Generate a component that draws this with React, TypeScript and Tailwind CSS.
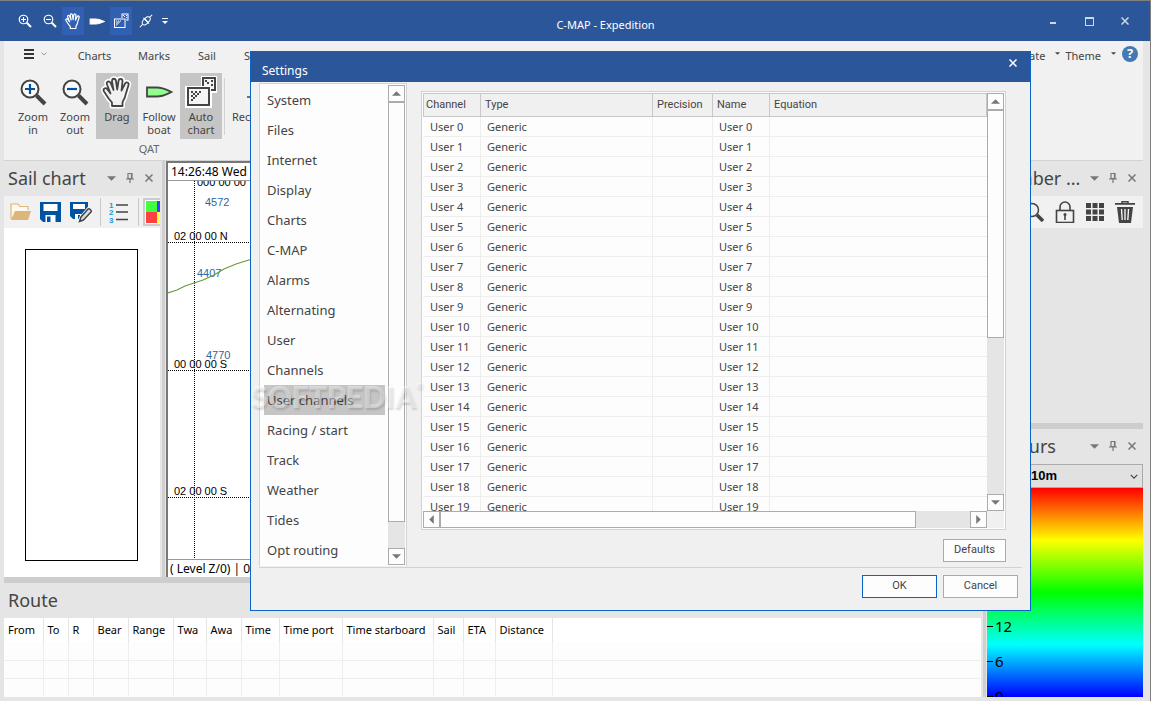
import React, { useState } from "react";

interface Column {
  label: string;
  width: string;
}

const categories = [
  "System",
  "Files",
  "Internet",
  "Display",
  "Charts",
  "C-MAP",
  "Alarms",
  "Alternating",
  "User",
  "Channels",
  "User channels",
  "Racing / start",
  "Track",
  "Weather",
  "Tides",
  "Opt routing",
];

const channels = Array.from({ length: 20 }, (_, i) => ({ name: `User ${i}`, type: "Generic" }));

const channelColumns: Column[] = [
  { label: "Channel", width: "w-[58px]" },
  { label: "Type", width: "w-[172px]" },
  { label: "Precision", width: "w-[60px]" },
  { label: "Name", width: "w-[57px]" },
  { label: "Equation", width: "w-auto" },
];

const routeColumns: Column[] = [
  { label: "From", width: "w-[39px]" },
  { label: "To", width: "w-[25px]" },
  { label: "R", width: "w-[25px]" },
  { label: "Bear", width: "w-[35px]" },
  { label: "Range", width: "w-[45px]" },
  { label: "Twa", width: "w-[33px]" },
  { label: "Awa", width: "w-[35px]" },
  { label: "Time", width: "w-[38px]" },
  { label: "Time port", width: "w-[63px]" },
  { label: "Time starboard", width: "w-[91px]" },
  { label: "Sail", width: "w-[30px]" },
  { label: "ETA", width: "w-[32px]" },
  { label: "Distance", width: "w-[57px]" },
];

const depthTicks = [0, 6, 12, 18, 24, 30];

/* ---------- Icons ---------- */

function ZoomIcon({ minus, small }: { minus?: boolean; small?: boolean }) {
  return (
    <svg viewBox="0 0 28 28" className={small ? "h-[14px] w-[14px]" : "h-7 w-7"} fill="none">
      <circle cx="11" cy="11" r="8.5" stroke="currentColor" strokeWidth={small ? 2.4 : 2} fill={small ? "none" : "#fafafa"} />
      <path d="M17.5 17.5 26 26" stroke="currentColor" strokeWidth="4" />
      <path
        d={minus ? "M6 11h10" : "M6 11h10M11 6v10"}
        stroke={small ? "currentColor" : "#0050a0"}
        strokeWidth="2.2"
      />
    </svg>
  );
}

const handPath =
  "M10 29v-3.500L7 22 2 14.500C.5 11.500 3.500 10 5.300 12.200L8.500 16.500 5 7.500C4 4.500 7.200 3.200 8.600 6L11.500 13 10 4.500C9.800 1 13.500.8 14 4L15.200 12.500 16.500 4C17 .8 20.700 1.200 20.500 4.500L19.500 13.500 22.800 7C24.300 4 27.500 5.500 26.400 8.500L23.500 18C23 22 21 23 20.500 25.500V29Z";

function HandIcon({ small }: { small?: boolean }) {
  return (
    <svg viewBox="0 0 30 30" className={small ? "h-4 w-4" : "h-[30px] w-[30px] overflow-visible"} strokeLinejoin="round">
      {!small && <path d={handPath} fill="#fff" stroke="#fff" strokeWidth="5" />}
      <path d={handPath} fill={small ? "none" : "#f1f1f1"} stroke="currentColor" strokeWidth={small ? 2.2 : 1.8} />
    </svg>
  );
}

function BoatIcon({ small }: { small?: boolean }) {
  return (
    <svg viewBox="0 0 28 12" className={small ? "h-[7px] w-4" : "h-3 w-7"}>
      <path
        d="M2 1.500H12C18 1.500 22 4 26.500 6 22 8 18 10.500 12 10.500H2Z"
        fill={small ? "#fff" : "#90ff90"}
        stroke="currentColor"
        strokeWidth="1.800"
      />
    </svg>
  );
}

function AutoChartIcon({ small }: { small?: boolean }) {
  const inner = small ? "#3160b2" : "#f4f4f4";
  return (
    <svg viewBox="0 0 32 32" className={small ? "h-4 w-4" : "h-8 w-8"}>
      {!small && <path d="M16 0h16v17h-5v15H0V10h16Z" fill="#fff" />}
      <rect x="18" y="2" width="12" height="12" fill={inner} stroke="currentColor" strokeWidth="2" />
      <path d="M20 4h2v2h-2zM26 4h2v2h-2zM22 6h2v2h-2zM26 8h2v2h-2zM24 10h2v2h-2z" fill="currentColor" />
      <rect x="1" y="10" width="25" height="21" fill={small ? inner : "#fff"} />
      <rect x="3" y="12" width="21" height="17" fill={inner} stroke="currentColor" strokeWidth="2" />
      <path
        d="M6 15h2v2H6zM10 15h2v2h-2zM14 15h2v2h-2zM8 17h2v2H8zM12 17h2v2h-2zM6 19h2v2H6zM10 19h2v2h-2zM8 21h2v2H8zM6 23h2v2H6z"
        fill="currentColor"
      />
    </svg>
  );
}

function PlugIcon() {
  return (
    <svg viewBox="0 0 16 16" className="h-[14px] w-[14px]" fill="none" stroke="currentColor" strokeWidth="1.200">
      <path d="M1 15 4 12M12 4l3-3M4.500 12C2.500 10 4 7.500 6.500 5.500L10.500 9.500C8.500 12 6 13.500 4.500 12ZM6.500 5.500C8.500 3 11 2.500 12.300 3.800S13 7.500 10.500 9.500" />
      <path d="M5 4.500 11.500 11" />
    </svg>
  );
}

function Caret({ className }: { className?: string }) {
  return (
    <svg viewBox="0 0 8 4" className={className}>
      <path d="M0 0h8L4 4z" fill="currentColor" />
    </svg>
  );
}

function Cross({ className }: { className?: string }) {
  return (
    <svg viewBox="0 0 8 8" className={className} fill="none" stroke="currentColor" strokeWidth="1.500">
      <path d="M.5.5l7 7M7.500.5l-7 7" />
    </svg>
  );
}

function FolderIcon() {
  return (
    <svg viewBox="0 0 22 20" className="h-5 w-[22px]">
      <path d="M1 17V2h7l2 2.500h8V8" fill="#fff8ec" stroke="#dcb67a" strokeWidth="1.200" />
      <path d="M1 18 5 9h16l-3 9z" fill="#dcb67a" />
    </svg>
  );
}

function SaveIcon({ edit }: { edit?: boolean }) {
  return (
    <svg viewBox="0 0 22 22" className="h-[22px] w-[22px]">
      <path d={edit ? "M0 1h18v13l-4 4H3l-3-3Z" : "M0 1h21v20H3l-3-3Z"} fill="#0053a0" />
      <path d={edit ? "M3 3h12v5H3z" : "M3.500 3h14v7h-14z"} fill="#fff" />
      <path d={edit ? "M5 13h6v5H5z" : "M5.500 14h10v7h-10z"} fill="#fff" />
      <path d={edit ? "M8 14h2v4H8z" : "M7 15.500h3.500V21H7z"} fill="#0053a0" />
      {edit && (
        <>
          <path d="m9 21 2-5 7-8 3 3-7 8Z" fill="#fff" stroke="#fff" strokeWidth="3" />
          <path d="m9.500 20.500 1.500-4.500 7-8c1-1 4 1.500 3 3l-7.500 8z" fill="#ddd" stroke="#444" strokeWidth="1.500" />
        </>
      )}
    </svg>
  );
}

function NumberedListIcon() {
  return (
    <svg viewBox="0 0 20 22" className="h-[22px] w-5">
      <path d="M7 4h12M7 11h12M7 18.500h12" stroke="#444" strokeWidth="1.500" />
      <g fill="#1c97dc" fontSize="8" fontWeight="700" fontFamily="Liberation Sans, sans-serif">
        <text x="0" y="7">1</text>
        <text x="0" y="14">2</text>
        <text x="0" y="22">3</text>
      </g>
    </svg>
  );
}

/* ---------- Small shared parts ---------- */

function PanelHeader({ title }: { title: string }) {
  return (
    <div className="flex h-[35px] shrink-0 items-center pr-px pb-px text-[#777]">
      <h2 className="min-w-0 flex-1 pl-1 text-[18px] leading-6 whitespace-nowrap text-[#444]">{title}</h2>
      <button aria-label="Panel menu" className="flex w-5 justify-center">
        <Caret className="h-[5px] w-[9px]" />
      </button>
      <button aria-label="Pin panel" className="flex w-[18px] justify-center">
        <svg viewBox="0 0 8 10" className="h-[10px] w-2" fill="none" stroke="currentColor">
          <path d="M2 .5h4v5H2zM5.500 1v4M0 6h8M4 6v4" strokeWidth="1.200" />
        </svg>
      </button>
      <button aria-label="Close panel" className="flex w-5 justify-center">
        <Cross className="h-2 w-2" />
      </button>
    </div>
  );
}

function RibbonButton({ label, icon, active }: { label: string; icon: React.ReactNode; active?: boolean }) {
  return (
    <button
      className={`flex h-[66px] w-[42px] flex-col items-center text-[11px] leading-[13px] ${active ? "bg-[#c5c5c5]" : ""}`}
    >
      <span className="flex h-[37px] shrink-0 items-center justify-center pt-px">{icon}</span>
      <span className="w-9 text-center">{label}</span>
    </button>
  );
}

function ScrollButton({ label, rotate }: { label: string; rotate?: string }) {
  return (
    <button
      aria-label={label}
      className="flex h-[17px] w-[17px] shrink-0 items-center justify-center border border-[#ababab] bg-[#fdfdfd] text-[#777]"
    >
      <Caret className={`h-[5px] w-[9px] ${rotate ?? ""}`} />
    </button>
  );
}

/* ---------- Main window ---------- */

function TitleBar() {
  return (
    <header className="flex h-10 shrink-0 items-center bg-[#2b579a] text-white">
      <div className="flex w-[174px] items-center pl-[13px]">
        <button aria-label="Zoom in" className="flex h-7 w-6 items-center justify-center">
          <ZoomIcon small />
        </button>
        <button aria-label="Zoom out" className="flex h-7 w-[25px] items-center justify-center">
          <ZoomIcon small minus />
        </button>
        <button aria-label="Drag" className="flex h-7 w-[22px] items-center justify-center bg-[#3160b2]">
          <HandIcon small />
        </button>
        <button aria-label="Follow boat" className="flex h-7 w-[26px] items-center justify-center">
          <BoatIcon small />
        </button>
        <button aria-label="Auto chart" className="flex h-7 w-[22px] items-center justify-center bg-[#3160b2]">
          <AutoChartIcon small />
        </button>
        <button aria-label="Connect" className="flex h-7 w-[27px] items-center justify-center">
          <PlugIcon />
        </button>
        <button aria-label="Customise toolbar" className="flex h-7 w-3 flex-col items-center justify-center gap-[2px]">
          <span className="h-px w-[6px] bg-white" />
          <Caret className="h-[3px] w-[6px]" />
        </button>
      </div>
      <h1 className="flex-1 pt-2 pl-[2px] text-center text-[11px]">C-MAP - Expedition</h1>
      <div className="flex items-center pr-[7px] text-[#d0d6e2]">
        <button aria-label="Minimise" className="flex h-7 w-9 items-center justify-center pt-1">
          <span className="h-[2px] w-[6px] bg-[#d0d6e2]" />
        </button>
        <button aria-label="Maximise" className="flex h-7 w-9 items-center justify-center">
          <span className="h-[9px] w-[9px] border border-t-2 border-[#d0d6e2]" />
        </button>
        <button aria-label="Close" className="flex h-7 w-9 items-center justify-center">
          <Cross className="h-2 w-2" />
        </button>
      </div>
    </header>
  );
}

function Ribbon() {
  return (
    <nav className="flex h-[120px] shrink-0 flex-col border-b border-[#d2d2d2] bg-[#f1f1f1] text-[#444]">
      <div className="flex h-8 items-center pb-[2px] text-[11px]">
        <button aria-label="File menu" className="flex w-[66px] items-center gap-[7px] pb-1 pl-5">
          <span className="flex flex-col gap-[2px]">
            <span className="h-[2px] w-[10px] bg-[#333]" />
            <span className="h-[2px] w-[10px] bg-[#333]" />
            <span className="h-[2px] w-[10px] bg-[#333]" />
          </span>
          <svg viewBox="0 0 6 4" className="h-1 w-[6px]" fill="none" stroke="#999">
            <path d="M.5.5 3 3 5.500.5" />
          </svg>
        </button>
        <button className="w-[49px]">Charts</button>
        <button className="ml-3 w-[46px]">Marks</button>
        <button className="ml-2 w-11">Sail</button>
        <button className="ml-[15px] whitespace-nowrap">Sensors</button>
        <div className="ml-auto flex items-center">
          <button className="flex items-start gap-[10px]">
            Update
            <Caret className="mt-1 h-[3px] w-[5px]" />
          </button>
          <button className="ml-[5px] flex items-start gap-[10px]">
            Theme
            <Caret className="mt-1 h-[3px] w-[5px]" />
          </button>
          <button
            aria-label="Help"
            className="mr-[5px] mb-1 ml-[6px] flex h-4 w-4 items-center justify-center rounded-full bg-[#4579b5] text-[13px] font-bold text-white"
          >
            ?
          </button>
        </div>
      </div>
      <div className="flex pl-2">
        <div>
          <div className="flex">
            <RibbonButton label="Zoom in" icon={<ZoomIcon />} />
            <RibbonButton label="Zoom out" icon={<ZoomIcon minus />} />
            <RibbonButton label="Drag" icon={<HandIcon />} active />
            <RibbonButton label="Follow boat" icon={<BoatIcon />} />
            <RibbonButton label="Auto chart" icon={<AutoChartIcon />} active />
          </div>
          <div className="pl-16 text-center text-[11px] leading-5 text-[#666]">QAT</div>
        </div>
        <div className="mt-[5px] ml-[2px] h-[57px] w-px bg-[#d2d2d2]" />
        <button className="ml-[7px] flex h-[66px] flex-col items-center text-[11px] leading-[13px]">
          <span className="flex h-[37px] items-center">
            <svg viewBox="0 0 16 16" className="h-4 w-4" fill="none" stroke="#444" strokeWidth="1.500">
              <path d="M5 13h4" />
              <circle cx="12" cy="9" r="3" />
            </svg>
          </span>
          Record
        </button>
      </div>
    </nav>
  );
}

function SailChartPanel() {
  return (
    <section className="flex w-[156px] shrink-0 flex-col overflow-hidden">
      <PanelHeader title="Sail chart" />
      <div className="flex h-8 shrink-0 items-center bg-[#f1f1f1]">
        <button aria-label="Open" className="ml-[6px]">
          <FolderIcon />
        </button>
        <button aria-label="Save" className="ml-2">
          <SaveIcon />
        </button>
        <button aria-label="Save as" className="ml-2">
          <SaveIcon edit />
        </button>
        <span className="ml-2 h-7 w-px shrink-0 bg-[#c8c8c8]" />
        <button aria-label="Order" className="ml-2">
          <NumberedListIcon />
        </button>
        <span className="ml-[9px] h-7 w-px shrink-0 bg-[#c8c8c8]" />
        <button aria-label="Colours" className="ml-1 grid h-7 w-7 shrink-0 grid-cols-2 border-2 border-[#ccc] bg-white p-[1px]">
          <span className="bg-[#40ff40]" />
          <span className="bg-[#4040ff]" />
          <span className="bg-[#ff4040]" />
          <span className="bg-[#ffff40]" />
        </button>
      </div>
      <div className="flex flex-1 bg-white px-[21px] pt-[21px] pb-4">
        <div className="mr-px flex-1 border border-black" />
      </div>
    </section>
  );
}

function ChartView() {
  return (
    <section className="flex min-w-0 flex-1 flex-col border-t-2 border-l-2 border-[#777] bg-white">
      <div className="h-[18px] shrink-0 border-b border-[#999] pl-[3px] text-[12px] leading-[18px] text-black">
        14:26:48 Wed
      </div>
      <svg className="min-h-0 w-full flex-1" fontFamily="Liberation Sans, sans-serif" fontSize="11">
        <g stroke="#000" strokeDasharray="1 1" shapeRendering="crispEdges">
          <path d="M26.500 0V900M0 61.500H2000M0 189.500H2000M0 316.500H2000" />
        </g>
        <g fill="#000">
          <text x="29" y="5">000 00 00 W</text>
          <text x="6" y="59">02 00 00 N</text>
          <text x="6" y="187">00 00 00 S</text>
          <text x="6" y="314">02 00 00 S</text>
        </g>
        <g fill="#2f65a0">
          <text x="37" y="25">4572</text>
          <text x="29" y="96">4407</text>
          <text x="38" y="178">4770</text>
        </g>
        <path d="M0 112 9 109 17 105 26 102 35 99 46 94 56 88 68 83 84 78" fill="none" stroke="#6a9a3a" strokeWidth="1.200" />
      </svg>
      <div className="h-[18px] shrink-0 border-t border-[#999] pl-[2px] text-[12px] leading-[18px] whitespace-pre text-black">
        ( Level Z/0) | 0
      </div>
    </section>
  );
}

function RoutePanel() {
  return (
    <section className="shrink-0">
      <h2 className="pl-1 text-[18px] leading-[35px] text-[#444]">Route</h2>
      <div className="bg-[#fdfdfd] pb-px">
        <table className="w-full table-fixed border-collapse text-left text-[11px] text-black">
          <thead>
            <tr className="h-6 bg-white">
              {routeColumns.map((col) => (
                <th key={col.label} className={`${col.width} border-r border-[#e5e5e5] p-0 pl-1 font-normal whitespace-nowrap`}>
                  {col.label}
                </th>
              ))}
              <th />
            </tr>
          </thead>
          <tbody>
            {[0, 1, 2].map((row) => (
              <tr key={row} className="h-[18px] border-t border-[#eee] first:border-t-0">
                {routeColumns.map((col) => (
                  <td key={col.label} className="border-r border-[#eee] p-0" />
                ))}
                <td />
              </tr>
            ))}
          </tbody>
        </table>
      </div>
    </section>
  );
}

function NumberPanel() {
  return (
    <section className="flex h-[262px] shrink-0 flex-col">
      <PanelHeader title="Number ..." />
      <div className="flex h-8 items-center justify-end gap-[11px] bg-[#f1f1f1] pr-2 text-[#444]">
        <button aria-label="Find">
          <svg viewBox="0 0 20 20" className="h-5 w-5" fill="none" stroke="currentColor">
            <circle cx="8" cy="8" r="6.500" strokeWidth="1.500" />
            <path d="m13 13 6 6" strokeWidth="3.500" />
          </svg>
        </button>
        <button aria-label="Lock">
          <svg viewBox="0 0 20 22" className="h-[22px] w-5" fill="none" stroke="currentColor" strokeWidth="1.600">
            <rect x="1.500" y="9.500" width="17" height="12" />
            <path d="M5 9.500V6a5 5 0 0 1 10 0v3.500M10 14v5" />
            <circle cx="10" cy="13.500" r="1.500" fill="currentColor" stroke="none" />
          </svg>
        </button>
        <button aria-label="Grid">
          <svg viewBox="0 0 18 18" className="h-[18px] w-[18px]" fill="currentColor">
            <path d="M0 0h5v5H0zM6.500 0h5v5h-5zM13 0h5v5h-5zM0 6.500h5v5H0zM6.500 6.500h5v5h-5zM13 6.500h5v5h-5zM0 13h5v5H0zM6.500 13h5v5h-5zM13 13h5v5h-5z" />
          </svg>
        </button>
        <button aria-label="Delete">
          <svg viewBox="0 0 20 22" className="h-[22px] w-5">
            <path d="M7 2V.8h6V2" fill="none" stroke="currentColor" strokeWidth="1.500" />
            <path d="M0 2h20v1.800H0zM2 6h16l-2 16H4z" fill="currentColor" />
            <path d="m6.500 8 .7 11M10 8v11M13.500 8l-.7 11" stroke="#fff" strokeWidth="1.300" />
          </svg>
        </button>
      </div>
    </section>
  );
}

function ColoursPanel() {
  return (
    <section className="flex min-h-0 flex-1 flex-col">
      <PanelHeader title="Colours" />
      <div className="relative flex h-6 shrink-0">
        <select
          aria-label="Depth range"
          defaultValue="10m"
          className="w-full appearance-none border border-[#ababab] bg-[#e1e1e1] pl-[43px] font-['Liberation_Sans',sans-serif] text-[13px] font-bold text-black"
        >
          <option>10m</option>
        </select>
        <svg viewBox="0 0 10 6" className="pointer-events-none absolute top-[10px] right-[5px] h-[5px] w-2" fill="none" stroke="#444" strokeWidth="1.500">
          <path d="m1 1 4 4 4-4" />
        </svg>
      </div>
      <div className="relative flex-1 overflow-hidden bg-[linear-gradient(to_bottom,#f00_0%,#ff0_25%,#0f0_50%,#0ff_75%,#00f_100%)]">
        {depthTicks.map((depth, i) => (
          <div
            key={depth}
            className="absolute left-0 flex h-5 translate-y-1/2 items-center gap-[2px] text-[15px] leading-5 text-black"
            style={{ bottom: i * 35 + 1 }}
          >
            <span className="h-px w-[6px] bg-black" />
            {depth}
          </div>
        ))}
      </div>
    </section>
  );
}

/* ---------- Settings dialog ---------- */

function ChannelTable() {
  return (
    <div className="border border-[#d2d2d2] bg-[#fdfdfd] p-px">
      <div className="flex h-[418px]">
        <div className="min-w-0 flex-1 overflow-hidden">
          <table className="w-full table-fixed border-separate border-spacing-0 text-left text-[11px]">
            <thead>
              <tr className="h-6 bg-[#f0f0f0]">
                {channelColumns.map((col) => (
                  <th
                    key={col.label}
                    className={`${col.width} border-t border-r border-b border-[#c8c8c8] p-0 pl-1 font-['Roboto',sans-serif] font-normal first:border-l first:pl-[2px]`}
                  >
                    {col.label}
                  </th>
                ))}
              </tr>
            </thead>
            <tbody>
              {channels.map((channel) => (
                <tr key={channel.name} className="h-5">
                  <td className="border-r border-b border-[#eee] p-0 pt-[2px] pl-[7px]">{channel.name}</td>
                  <td className="border-r border-b border-[#eee] p-0 pt-[2px] pl-[6px]">{channel.type}</td>
                  <td className="border-r border-b border-[#eee] p-0" />
                  <td className="border-r border-b border-[#eee] p-0 pt-[2px] pl-[6px]">{channel.name}</td>
                  <td className="border-b border-[#eee] p-0" />
                </tr>
              ))}
            </tbody>
          </table>
        </div>
        <div className="flex w-[17px] flex-col bg-[#e5e5e5]">
          <ScrollButton label="Scroll up" rotate="rotate-180" />
          <div className="h-[228px] border border-[#ababab] bg-[#fdfdfd]" />
          <div className="mt-auto flex">
            <ScrollButton label="Scroll down" />
          </div>
        </div>
      </div>
      <div className="flex">
        <div className="flex flex-1 bg-[#e5e5e5]">
          <ScrollButton label="Scroll left" rotate="rotate-90" />
          <div className="w-[476px] border border-[#ababab] bg-[#fdfdfd]" />
          <div className="ml-auto flex">
            <ScrollButton label="Scroll right" rotate="-rotate-90" />
          </div>
        </div>
        <div className="w-[17px] bg-[#f0f0f0]" />
      </div>
    </div>
  );
}

function SettingsDialog() {
  const [selected, setSelected] = useState("User channels");

  return (
    <div
      role="dialog"
      aria-label="Settings"
      className="absolute top-[50px] right-[119px] left-[250px] border border-[#0a64c8] bg-[#f0f0f0] text-[#444]"
    >
      <div className="flex h-[30px] items-center justify-between bg-[#2b579a] pr-[13px] pl-[11px] text-white">
        <h2 className="pt-2 text-[12px] leading-4">Settings</h2>
        <button aria-label="Close settings" className="pb-2">
          <Cross className="h-2 w-2" />
        </button>
      </div>

      <div className="mx-2 mt-px flex border-b border-[#d2d2d2] pr-4 pb-px">
        <div className="flex border border-b-0 border-[#d2d2d2] bg-[#fdfdfd] p-px">
          <ul className="w-[127px] pr-[3px] pl-[3px]">
            {categories.map((name) => (
              <li key={name}>
                <button
                  onClick={() => setSelected(name)}
                  className={`h-[30px] w-full pt-[2px] pl-[3px] text-left text-[13px] ${name === selected ? "bg-[#c5c5c5]" : ""}`}
                >
                  {name}
                </button>
              </li>
            ))}
          </ul>
          <div className="flex w-[17px] flex-col bg-[#e5e5e5]">
            <ScrollButton label="Scroll list up" rotate="rotate-180" />
            <div className="h-[420px] border border-[#ababab] bg-[#fdfdfd]" />
            <div className="mt-auto flex">
              <ScrollButton label="Scroll list down" />
            </div>
          </div>
        </div>
        <div className="ml-[14px] min-w-0 flex-1 pt-2">
          <ChannelTable />
          <div className="mt-[9px] flex justify-end">
            <button className="h-[23px] w-[63px] border border-[#ababab] bg-[#fdfdfd] font-['Roboto',sans-serif] text-[11px]">
              Defaults
            </button>
          </div>
        </div>
      </div>

      <div className="flex justify-end gap-[6px] pt-[7px] pr-3 pb-3 font-['Roboto',sans-serif] text-[11px]">
        <button className="h-[23px] w-[75px] border border-[#0a64c8] bg-[#fdfdfd]">OK</button>
        <button className="h-[23px] w-[75px] border border-[#ababab] bg-[#fdfdfd]">Cancel</button>
      </div>

      {/* Watermark across the list */}
      <div className="pointer-events-none absolute top-[328px] left-0 flex items-start font-['Lato',sans-serif] text-[30px] leading-8 font-black text-white/40 [text-shadow:1px_2px_2px_rgba(0,0,0,0.14)]">
        SOFTPEDIA
        <span className="text-[9px] leading-3">®</span>
      </div>
    </div>
  );
}

export default function App() {
  return (
    <div className="relative flex h-screen w-full flex-col overflow-hidden border-t border-r border-[#7f7f7f] bg-[#e5e5e5] font-['Noto_Sans',sans-serif]">
      <TitleBar />
      <div className="flex min-h-0 flex-1 flex-col pr-[7px] pb-1 pl-1">
        <Ribbon />
        <main className="flex min-h-0 flex-1">
          <div className="flex min-w-0 flex-1 flex-col">
            <div className="flex min-h-0 flex-1">
              <SailChartPanel />
              <div className="mr-px ml-[2px] w-[3px] bg-[#d0d0d0]" />
              <ChartView />
            </div>
            <div className="h-[6px] shrink-0 bg-[#cdcdcd]" />
            <RoutePanel />
          </div>
          <div className="mr-px ml-[2px] w-[3px] bg-[#d0d0d0]" />
          <aside className="flex w-[156px] shrink-0 flex-col">
            <NumberPanel />
            <div className="h-[6px] shrink-0 bg-[#cdcdcd]" />
            <ColoursPanel />
          </aside>
        </main>
      </div>
      <SettingsDialog />
    </div>
  );
}
